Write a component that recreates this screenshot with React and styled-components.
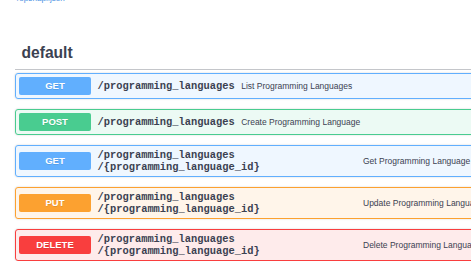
import React from 'react'
import styled, { createGlobalStyle } from 'styled-components'

const GlobalStyle = createGlobalStyle`
body {
    margin: 0;
    background: #fff;
    overflow: hidden;
    font-family: "Liberation Sans", Arial, sans-serif;
}
`

const methods = {
    get: '#61affe',
    post: '#49cc90',
    put: '#fca130',
    delete: '#f93e3e',
}

const tints = {
    get: 'rgba(97,175,254,.1)',
    post: 'rgba(73,204,144,.1)',
    put: 'rgba(252,161,48,.1)',
    delete: 'rgba(249,62,62,.1)',
}

const Page = styled.div`
width: 600px;
padding: 0 15px;
box-sizing: border-box;
`

const SpecLink = styled.a`
display: block;
margin-top: -6px;
margin-left: 2px;
font-size: 8px;
line-height: 9px;
color: #4990e2;
text-decoration: none;
`

const TagTitle = styled.h3`
margin: 33px 0 0;
padding: 6.5px 13px 6.5px 6.5px;
font-size: 15.6px;
line-height: 20px;
font-weight: 700;
color: #3b4151;
border-bottom: 1px solid rgba(59,65,81,.3);
`

const OpList = styled.div`
display: flex;
flex-direction: column;
gap: 10px;
margin-top: 3px;
`

const Opblock = styled.div`
display: flex;
align-items: center;
padding: 3px;
border: 1px solid ${p => methods[p.method]};
border-radius: 3px;
background: ${p => tints[p.method]};
box-shadow: 0 0 2px rgba(0,0,0,.19);
`

const Method = styled.span`
flex-shrink: 0;
width: 72px;
height: 18px;
line-height: 18px;
border-radius: 2px;
background: ${p => methods[p.method]};
color: #fff;
font-size: 9.5px;
font-weight: 700;
text-align: center;
text-shadow: 0 1px 0 rgba(0,0,0,.1);
`

const Path = styled.span`
flex-shrink: 0;
box-sizing: border-box;
max-width: 272px;
padding: 0 6.5px;
font-family: "Liberation Mono", "Courier New", monospace;
font-size: 10.4px;
line-height: 12px;
font-weight: 700;
color: #3b4151;
word-break: break-word;
`

const Description = styled.span`
flex: 1;
font-size: 8.5px;
color: #3b4151;
white-space: nowrap;
`

const ops = [
    { method: 'get', path: ['/programming_languages'], summary: 'List Programming Languages' },
    { method: 'post', path: ['/programming_languages'], summary: 'Create Programming Language' },
    { method: 'get', path: ['/programming_languages', '/{programming_language_id}'], summary: 'Get Programming Language' },
    { method: 'put', path: ['/programming_languages', '/{programming_language_id}'], summary: 'Update Programming Language' },
    { method: 'delete', path: ['/programming_languages', '/{programming_language_id}'], summary: 'Delete Programming Language' },
]

const App = () => {
    return (
        <Page>
            <GlobalStyle />
            <SpecLink href="#">/openapi.json</SpecLink>
            <TagTitle>default</TagTitle>
            <OpList>
                {ops.map((op, i) =>
                    <Opblock method={op.method} key={i}>
                        <Method method={op.method}>{op.method.toUpperCase()}</Method>
                        <Path>
                            {op.path.map((part, j) =>
                                <React.Fragment key={j}>{j > 0 && <wbr />}{part}</React.Fragment>
                            )}
                        </Path>
                        <Description>{op.summary}</Description>
                    </Opblock>
                )}
            </OpList>
        </Page>
    )
}

export default App
